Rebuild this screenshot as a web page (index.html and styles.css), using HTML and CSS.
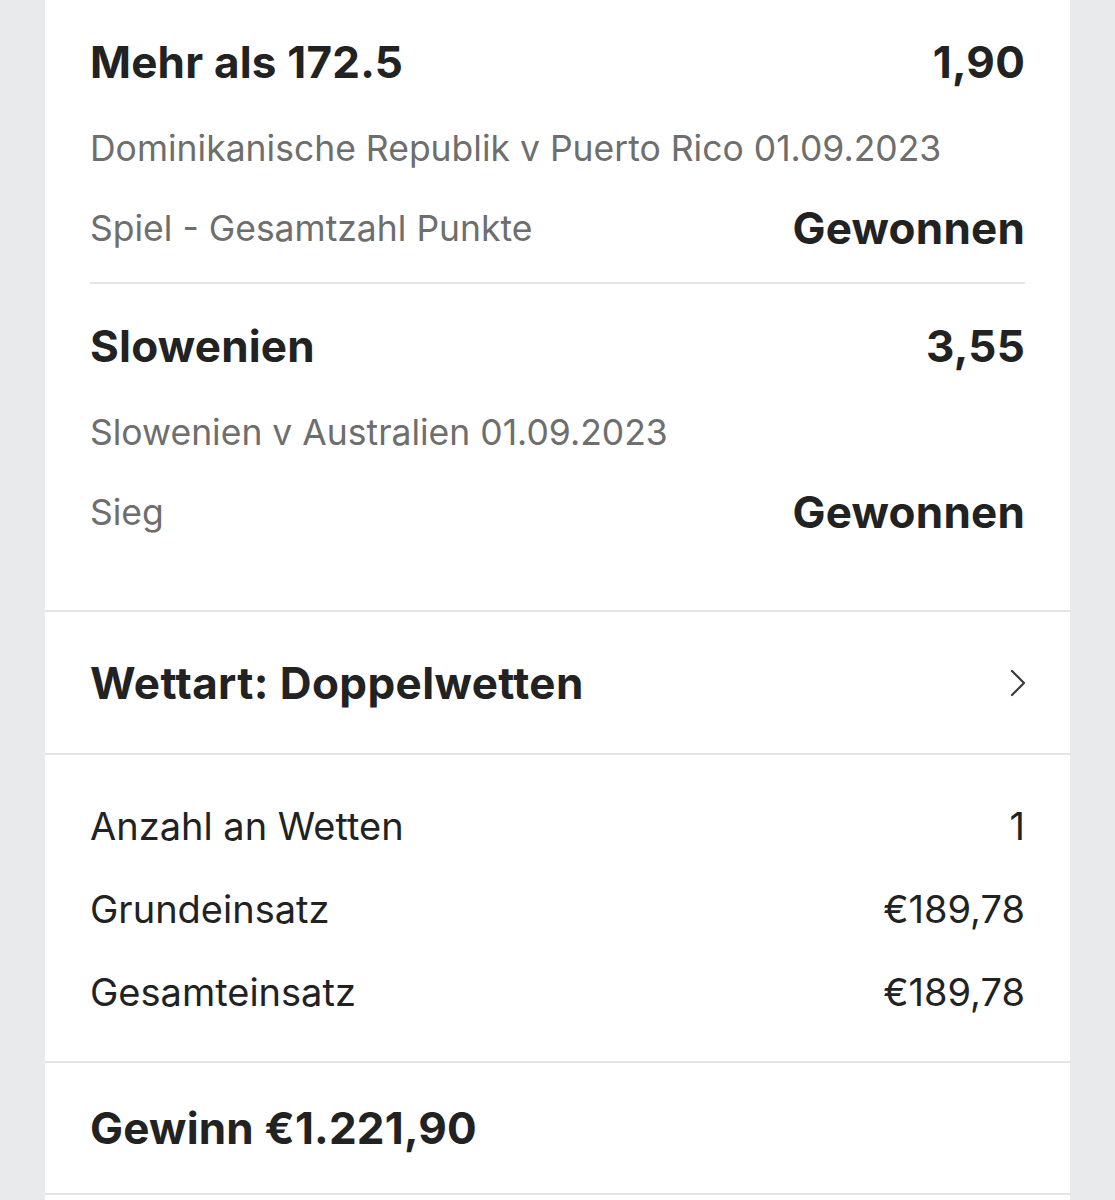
FILE: index.html
```html
<!DOCTYPE html>
<html lang="de">
<head>
    <meta charset="UTF-8">
    <meta name="viewport" content="width=device-width, initial-scale=1.0">
    <title>Wettschein</title>
    <link rel="stylesheet" href="styles.css">
</head>
<body>

    <div class="slip">

        <!-- Legs -->
        <section class="legs">
            <div class="leg">
                <div class="row title-row">
                    <span>Mehr als 172.5</span>
                    <span>1,90</span>
                </div>
                <div class="row sub-row">
                    <span>Dominikanische Republik v Puerto Rico 01.09.2023</span>
                </div>
                <div class="row market-row">
                    <span>Spiel - Gesamtzahl Punkte</span>
                    <span class="result">Gewonnen</span>
                </div>
            </div>

            <div class="leg">
                <div class="row title-row">
                    <span>Slowenien</span>
                    <span>3,55</span>
                </div>
                <div class="row sub-row">
                    <span>Slowenien v Australien 01.09.2023</span>
                </div>
                <div class="row market-row">
                    <span>Sieg</span>
                    <span class="result">Gewonnen</span>
                </div>
            </div>
        </section>

        <!-- Bet type -->
        <section class="bet-type">
            <span>Wettart: Doppelwetten</span>
            <svg class="chevron" width="16" height="28" viewBox="0 0 16 28">
                <path d="M2 2 L14 14 L2 26" fill="none" stroke="#3a3a3a" stroke-width="2.2" stroke-linecap="round" stroke-linejoin="round"/>
            </svg>
        </section>

        <!-- Stakes -->
        <section class="stakes">
            <div class="stake-row">
                <span>Anzahl an Wetten</span>
                <span>1</span>
            </div>
            <div class="stake-row">
                <span>Grundeinsatz</span>
                <span>€189,78</span>
            </div>
            <div class="stake-row">
                <span>Gesamteinsatz</span>
                <span>€189,78</span>
            </div>
        </section>

        <!-- Return -->
        <section class="payout">
            <span>Gewinn €1.221,90</span>
        </section>

    </div>

</body>
</html>
```

FILE: styles.css
```css
body {
    margin: 0;
    padding: 0;
    background-color: #e9eaec;
    font-family: Inter, "Noto Sans", Arial, sans-serif;
    color: #222222;
}

.slip {
    margin: 0 45px;
    background-color: #ffffff;
    min-height: 1200px;
}

/* Legs */
.legs {
    border-bottom: 2px solid #e4e4e4;
}

.leg {
    margin: 0 45px;
    padding: 32px 0 24px;
    border-bottom: 2px solid #e4e4e4;
}

.leg:last-child {
    border-bottom: none;
    padding-bottom: 68px;
}

.row {
    display: flex;
    justify-content: space-between;
    align-items: center;
    height: 60px;
}

.title-row {
    font-size: 44px;
    font-weight: 700;
    letter-spacing: 0.2px;
}

.sub-row {
    margin-top: 26px;
    font-size: 35.5px;
    color: #6e6e6e;
}

.market-row {
    margin-top: 20px;
    font-size: 35.5px;
    color: #6e6e6e;
}

.market-row .result {
    font-size: 44px;
    font-weight: 700;
    letter-spacing: 0.2px;
    color: #222222;
}

/* Bet type */
.bet-type {
    display: flex;
    justify-content: space-between;
    align-items: center;
    height: 141px;
    padding: 0 45px;
    border-bottom: 2px solid #e4e4e4;
    font-size: 44px;
    font-weight: 700;
    letter-spacing: 0.4px;
}

.chevron {
    margin-right: -1px;
}

/* Stakes */
.stakes {
    padding: 29px 45px 28px;
    border-bottom: 2px solid #e4e4e4;
}

.stake-row {
    display: flex;
    justify-content: space-between;
    align-items: center;
    height: 83px;
    font-size: 38px;
}

/* Return */
.payout {
    display: flex;
    align-items: center;
    height: 130px;
    padding: 0 45px;
    border-bottom: 2px solid #e4e4e4;
    font-size: 44px;
    font-weight: 700;
    letter-spacing: 0.2px;
}
```
